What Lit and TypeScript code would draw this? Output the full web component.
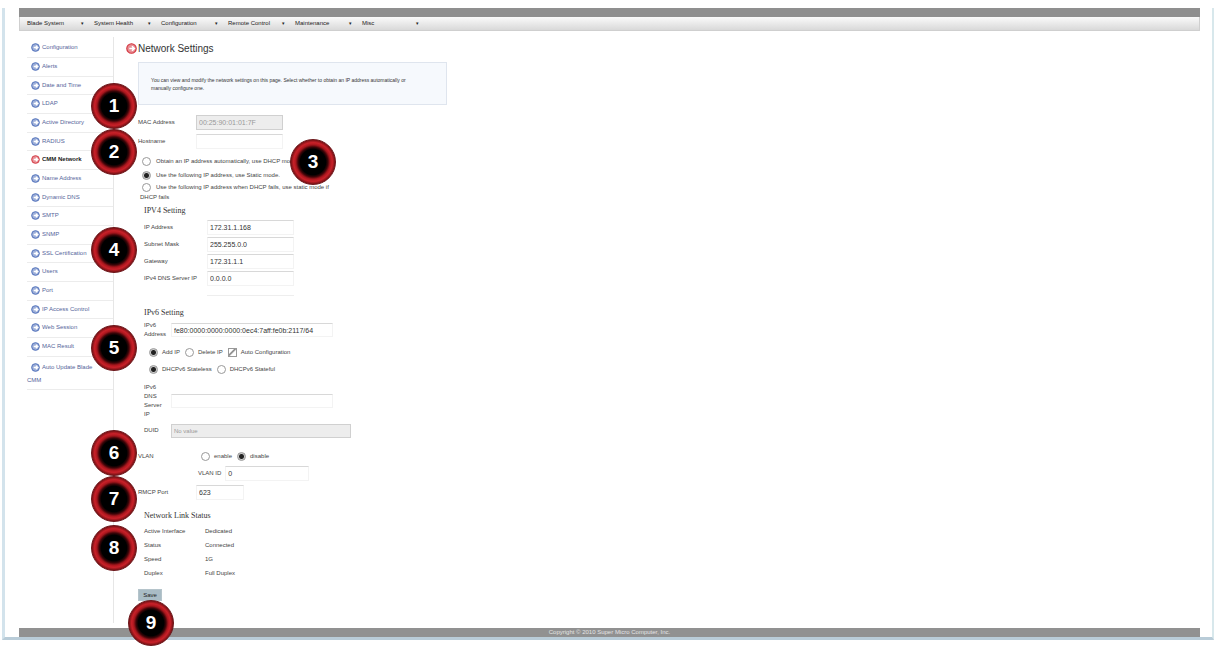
import { LitElement, html, css, svg } from "lit";
import { customElement, property } from "lit/decorators.js";

const MENU = ["Blade System", "System Health", "Configuration", "Remote Control", "Maintenance", "Misc"];

const SIDE = [
  "Configuration", "Alerts", "Date and Time", "LDAP", "Active Directory", "RADIUS", "CMM Network",
  "Name Address", "Dynamic DNS", "SMTP", "SNMP", "SSL Certification", "Users", "Port",
  "IP Access Control", "Web Session", "MAC Result",
];

const CALLOUTS = [
  { n: 1, x: 114, y: 106 }, { n: 2, x: 114, y: 152 }, { n: 3, x: 313, y: 162 },
  { n: 4, x: 114, y: 250 }, { n: 5, x: 114, y: 348 }, { n: 6, x: 114, y: 453 },
  { n: 7, x: 114, y: 499 }, { n: 8, x: 114, y: 548 }, { n: 9, x: 151, y: 623 },
];

const arrowIcon = svg`<svg viewBox="0 0 10 10" width="9" height="9" aria-hidden="true">
  <circle cx="5" cy="5" r="4.3" fill="currentColor" fill-opacity="0.55" stroke="currentColor" stroke-width="1"/>
  <path d="M3 5h4.6M5.4 3L7.6 5L5.4 7" fill="none" stroke="#fff" stroke-width="1.4"/></svg>`;

@customElement("app-callout")
export class AppCallout extends LitElement {
  @property({ type: Number }) number = 0;

  static styles = css`
    :host { display: block; width: 46px; height: 46px; }
    .disc {
      box-sizing: border-box; width: 46px; height: 46px; border-radius: 50%;
      display: flex; align-items: center; justify-content: center;
      border: 1px solid #6b1418;
      background: radial-gradient(circle closest-side, #000 0 58%, #3d0508 68%, #a8161d 78%, #c92129 88%, #7c1216 100%);
      color: #fff; font: bold 19px/20px "Liberation Sans", Arial, sans-serif;
    }
  `;

  render() {
    return html`<div class="disc">${this.number}</div>`;
  }
}

@customElement("app-root")
export class AppRoot extends LitElement {
  static styles = css`
    :host {
      display: block; position: relative; min-height: 100vh; box-sizing: border-box;
      padding: 8px 1px 8px 2px; background: #fff;
      font-family: "Liberation Sans", Arial, sans-serif; font-size: 6px; line-height: 9px; color: #444;
    }
    * { box-sizing: border-box; }
    .frame {
      border-left: 3px solid #d3e3ec; border-right: 2px solid #d8e8ec; border-bottom: 3px solid #b9ccd8;
      padding: 0 12px 0 14px;
    }
    .topbar { height: 9px; background: #8f8f8f; }
    .menu {
      display: flex; height: 14px; padding-left: 7px; align-items: center;
      background: linear-gradient(#fafafa, #d9d9d9); border: 1px solid #cfcfcf; border-top: 0; color: #222;
    }
    .menu a { width: 67px; display: flex; justify-content: space-between; padding-right: 10px; color: inherit; text-decoration: none; }
    .caret { font-size: 5px; }
    .body { display: flex; padding: 6px 0 5px; }
    .side { width: 95px; border-right: 1px solid #e6e6e6; }
    .side ul { list-style: none; margin: 0; padding: 2px 0 0 8px; }
    .side li { height: 19px; border-bottom: 1px solid #ececec; padding: 4px 0 0 4px; white-space: nowrap; }
    .side li:nth-child(3n) { height: 18px; }
    .side li:last-child { height: 33px; padding-left: 0; line-height: 13px; white-space: normal; }
    .side li:last-child svg { margin-left: 4px; }
    .side a { color: #55659a; text-decoration: none; }
    .side svg { color: #4a6bb8; vertical-align: middle; margin-right: 2px; }
    .side .on { color: #222; font-weight: bold; }
    .side .on svg, .title svg { color: #d3323c; }
    .main { flex: 1; padding: 0 0 22px 12px; }
    .title {
      display: flex; align-items: center; gap: 1px; height: 22px; margin: 0;
      font-size: 10px; font-weight: normal; color: #333;
    }
    .title svg { width: 11px; height: 11px; }
    .note {
      width: 309px; height: 43px; margin: 3px 0 9px 12px; padding: 13px 12px 0;
      background: #f6f9fd; border: 1px solid #dfe5ee; font-size: 5px; line-height: 8px; color: #333;
    }
    form { padding-left: 12px; }
    .row { display: flex; align-items: center; height: 17px; }
    .row > label:first-child, .row > .key { width: 58px; }
    .host { height: 20px; margin-bottom: 3px; }
    .option { display: flex; align-items: center; height: 14px; gap: 5px; padding-left: 4px; }
    .wrapped { height: 20px; display: block; }
    .wrapped .option { height: 11px; }
    .wrapped .rest { display: block; padding-left: 2px; }
    input { margin: 0; color: #333; font: 6px/9px "Liberation Sans", Arial, sans-serif; }
    input[type="text"] {
      width: 87px; height: 15px; padding: 0 2px; background: #fff;
      border: 1px solid #f3f3f3; border-top-color: #d8d8d8; border-radius: 0; font-size: 7px; outline: none;
    }
    input[type="text"]:disabled { background: #ededed; border-color: #d0d0d0; color: #999; }
    input[type="radio"], input[type="checkbox"] {
      appearance: none; flex: none; width: 9px; height: 9px; border: 1px solid #999; background: #fff;
    }
    input[type="radio"] { border-radius: 50%; }
    input[type="radio"]:checked { background: radial-gradient(circle, #222 0 2px, #ccc 3px); }
    input[type="checkbox"]:checked { background: linear-gradient(135deg, #fff 30%, #777 45%, #fff 60%); }
    .group { margin: 0; height: 17px; padding-top: 4px; font: 8px/9px "Liberation Serif", serif; color: #333; }
    .indent { padding-left: 6px; }
    .v4 .row > label:first-child { width: 63px; }
    .blank { height: 9px; width: 87px; margin-left: 63px; border-bottom: 1px solid #eee; }
    .v6 { padding-top: 8px; }
    .v6 .row > label:first-child { width: 27px; }
    .v6 .tall { height: auto; margin-bottom: 5px; }
    .v6 .tall label { padding-right: 6px; }
    .v6 .dns { margin: 5px 0 3px; }
    .v6 .address { width: 162px; height: 14px; }
    .v6 .duid { width: 180px; height: 14px; font-size: 6px; }
    .choices { display: flex; align-items: center; gap: 4px; height: 17px; padding-left: 5px; }
    .choices label { margin-right: 1px; }
    .vlan { margin-top: 9px; }
    .vlanid { padding-left: 60px; gap: 4px; }
    .row > label.id:first-child { width: auto; }
    .vlanid input { width: 84px; }
    .rmcp input { width: 48px; }
    .rmcp { margin: 2px 0 6px; }
    .status { margin: 0; }
    .status div { display: flex; height: 14px; align-items: center; }
    .status dt { width: 61px; }
    .status dd { margin: 0; }
    .save {
      display: block; width: 24px; height: 12px; margin-top: 9px; padding: 0; border: 1px solid #b5c4cb; border-radius: 0;
      background: #a9bcc5; color: #222; font: 6px/9px "Liberation Sans", Arial, sans-serif;
    }
    .footer { height: 9px; background: #919191; color: #e4e4e4; text-align: center; }
    app-callout { position: absolute; transform: translate(-50%, -50%); }
  `;

  private text(id: string, label: string, value: string) {
    return html`<div class="row"><label for=${id}>${label}</label><input type="text" id=${id} .value=${value}></div>`;
  }

  render() {
    return html`
      <div class="frame">
        <div class="topbar"></div>
        <nav class="menu">${MENU.map((m) => html`<a href="#"><span>${m}</span><span class="caret">▾</span></a>`)}</nav>
        <div class="body">
          <nav class="side"><ul>
            ${SIDE.map((s) => html`<li><a href="#" class=${s === "CMM Network" ? "on" : ""}>${arrowIcon}${s}</a></li>`)}
            <li><a href="#">${arrowIcon}Auto Update Blade<br>CMM</a></li>
          </ul></nav>
          <main class="main">
            <h1 class="title">${arrowIcon}Network Settings</h1>
            <div class="note">You can view and modify the network settings on this page. Select whether to obtain an IP address automatically or<br>manually configure one.</div>
            <form @submit=${(e: Event) => e.preventDefault()}>
              <div class="row"><label for="mac">MAC Address</label><input type="text" id="mac" disabled .value=${"00:25:90:01:01:7F"}></div>
              <div class="row host"><label for="host">Hostname</label><input type="text" id="host"></div>
              <label class="option"><input type="radio" name="mode">Obtain an IP address automatically, use DHCP mode.</label>
              <label class="option"><input type="radio" name="mode" checked>Use the following IP address, use Static mode.</label>
              <label class="wrapped"><span class="option"><input type="radio" name="mode">Use the following IP address when DHCP fails, use static mode if</span><span class="rest">DHCP fails</span></label>
              <div class="indent v4">
                <h2 class="group">IPV4 Setting</h2>
                ${this.text("ip", "IP Address", "172.31.1.168")}
                ${this.text("mask", "Subnet Mask", "255.255.0.0")}
                ${this.text("gateway", "Gateway", "172.31.1.1")}
                ${this.text("dns4", "IPv4 DNS Server IP", "0.0.0.0")}
                <div class="blank"></div>
              </div>
              <div class="indent v6">
                <h2 class="group">IPv6 Setting</h2>
                <div class="row tall"><label for="ip6">IPv6 Address</label><input class="address" type="text" id="ip6" .value=${"fe80:0000:0000:0000:0ec4:7aff:fe0b:2117/64"}></div>
                <div class="choices">
                  <input type="radio" name="act" id="add" checked><label for="add">Add IP</label>
                  <input type="radio" name="act" id="del"><label for="del">Delete IP</label>
                  <input type="checkbox" id="auto" checked><label for="auto">Auto Configuration</label>
                </div>
                <div class="choices">
                  <input type="radio" name="dhcp" id="sl" checked><label for="sl">DHCPv6 Stateless</label>
                  <input type="radio" name="dhcp" id="sf"><label for="sf">DHCPv6 Stateful</label>
                </div>
                <div class="row tall dns"><label for="dns6">IPv6<br>DNS<br>Server<br>IP</label><input class="address" type="text" id="dns6"></div>
                <div class="row"><label for="duid">DUID</label><input class="duid" type="text" id="duid" disabled .value=${"No value"}></div>
              </div>
              <div class="row vlan"><span class="key">VLAN</span><div class="choices">
                <input type="radio" name="vlan" id="von"><label for="von">enable</label>
                <input type="radio" name="vlan" id="voff" checked><label for="voff">disable</label></div></div>
              <div class="row vlanid"><label class="id" for="vid">VLAN ID</label><input type="text" id="vid" .value=${"0"}></div>
              <div class="row rmcp"><label for="rmcp">RMCP Port</label><input type="text" id="rmcp" .value=${"623"}></div>
              <div class="indent">
                <h2 class="group">Network Link Status</h2>
                <dl class="status">
                  <div><dt>Active Interface</dt><dd>Dedicated</dd></div>
                  <div><dt>Status</dt><dd>Connected</dd></div>
                  <div><dt>Speed</dt><dd>1G</dd></div>
                  <div><dt>Duplex</dt><dd>Full Duplex</dd></div>
                </dl>
              </div>
              <button class="save">Save</button>
            </form>
          </main>
        </div>
        <footer class="footer">Copyright © 2010 Super Micro Computer, Inc.</footer>
      </div>
      ${CALLOUTS.map((c) => html`<app-callout .number=${c.n} style="left:${c.x}px;top:${c.y}px"></app-callout>`)}
    `;
  }
}
